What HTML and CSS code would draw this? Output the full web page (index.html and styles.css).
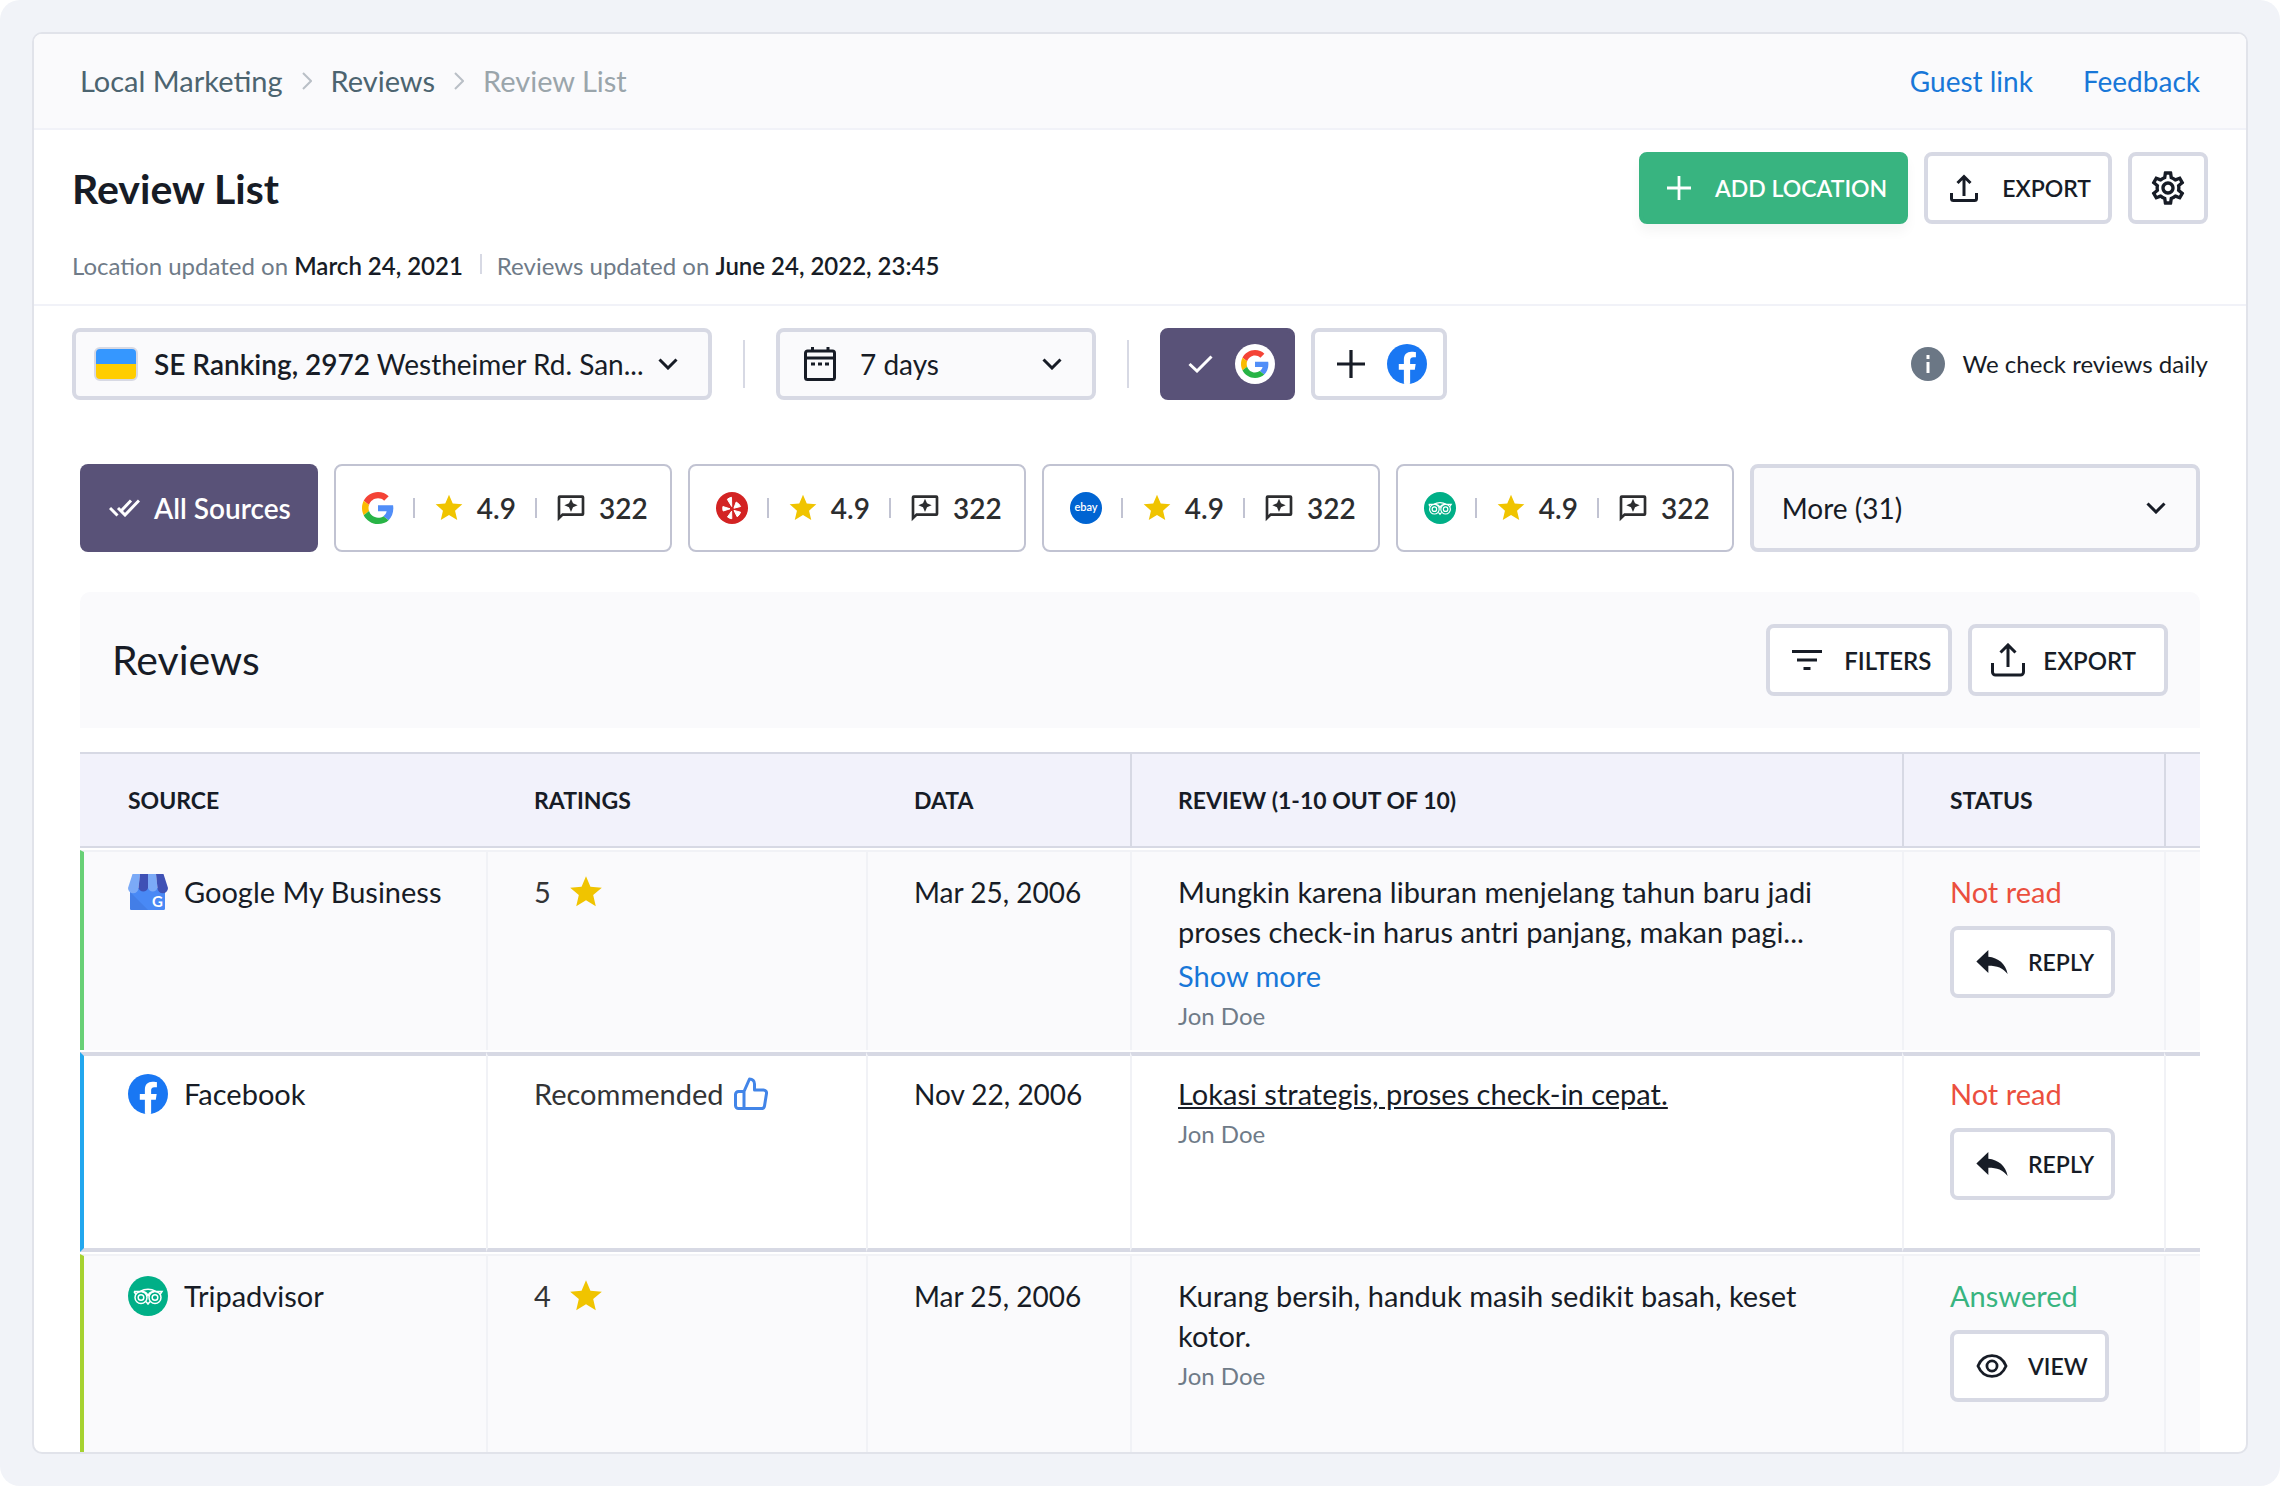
FILE: index.html
```html
<!DOCTYPE html>
<html lang="en">
  <head>
    <title>Review List</title>
    <meta charset="UTF-8">
    <meta name="viewport" content="width=device-width, initial-scale=1.0">
    <link rel="stylesheet" href="styles.css">
  </head>
  <body>

<!-- ICONS -->
<svg class="sprite" aria-hidden="true">
<symbol id="chevron" viewBox="0 0 20 12"><path d="M1.5 1.5 10 10l8.5-8.5" fill="none" stroke="currentColor" stroke-width="3"/></symbol>
<symbol id="crumb" viewBox="0 0 10 18"><path d="M1 1l8 8-8 8" fill="none" stroke="currentColor" stroke-width="2"/></symbol>
<symbol id="plus" viewBox="0 0 26 26"><path d="M13 0v26M0 13h26" stroke="currentColor" stroke-width="3"/></symbol>
<symbol id="export" viewBox="0 0 28 28"><path d="M14 22V3M7.5 9 14 2.500 20.500 9" fill="none" stroke="currentColor" stroke-width="3"/><path d="M1.500 19v5.500a2 2 0 0 0 2 2h21a2 2 0 0 0 2-2V19" fill="none" stroke="currentColor" stroke-width="3"/></symbol>
<symbol id="share" viewBox="0 0 34 34"><path d="M17 24V2.500M9.500 9.500 17 2l7.500 7.500M1.500 20v9a3 3 0 0 0 3 3h25a3 3 0 0 0 3-3v-9" fill="none" stroke="currentColor" stroke-width="3"/></symbol>
<symbol id="gear" viewBox="0 0 24 24"><path fill="currentColor" d="M19.43 12.98c.04-.32.07-.64.07-.98 0-.34-.03-.66-.07-.98l2.110-1.650c.19-.15.24-.42.12-.64l-2-3.460c-.09-.16-.26-.25-.44-.25-.06 0-.12.01-.17.03l-2.490 1c-.52-.4-1.080-.73-1.690-.98l-.38-2.650C14.460 2.180 14.250 2 14 2h-4c-.25 0-.46.18-.49.42l-.38 2.650c-.61.25-1.170.59-1.690.98l-2.490-1c-.06-.02-.12-.03-.18-.03-.17 0-.34.09-.43.25l-2 3.460c-.13.22-.07.49.12.64l2.110 1.650c-.04.32-.07.65-.07.98 0 .33.03.66.07.98l-2.110 1.650c-.19.15-.24.42-.12.64l2 3.460c.09.16.26.25.44.25.06 0 .12-.01.17-.03l2.490-1c.52.4 1.080.73 1.690.98l.38 2.650c.03.24.24.42.49.42h4c.25 0 .46-.18.49-.42l.38-2.650c.61-.25 1.170-.59 1.690-.98l2.490 1c.06.02.12.03.18.03.17 0 .34-.09.43-.25l2-3.460c.12-.22.07-.49-.12-.64l-2.110-1.650zm-1.980-1.710c.04.31.05.52.05.73 0 .21-.02.43-.05.73l-.14 1.130.89.7 1.080.84-.7 1.210-1.270-.51-1.040-.42-.9.68c-.43.32-.84.56-1.250.73l-1.060.43-.16 1.130-.2 1.350h-1.400l-.19-1.350-.16-1.130-1.060-.43c-.43-.18-.83-.41-1.230-.71l-.91-.7-1.060.43-1.270.51-.7-1.210 1.080-.84.89-.7-.14-1.130c-.03-.31-.05-.54-.05-.74s.02-.43.05-.73l.14-1.130-.89-.7-1.080-.84.7-1.210 1.270.51 1.040.42.9-.68c.43-.32.84-.56 1.250-.73l1.060-.43.16-1.130.2-1.350h1.390l.19 1.350.16 1.130 1.060.43c.43.18.83.41 1.230.71l.91.7 1.060-.43 1.270-.51.7 1.210-1.070.85-.89.7.14 1.130zM12 8c-2.210 0-4 1.790-4 4s1.790 4 4 4 4-1.790 4-4-1.790-4-4-4zm0 6c-1.100 0-2-.9-2-2s.9-2 2-2 2 .9 2 2-.9 2-2 2z"/></symbol>
<symbol id="star" viewBox="0 0 24 24"><path fill="#f0c400" d="M12 17.270 18.180 21l-1.640-7.030L22 9.240l-7.190-.61L12 2 9.190 8.630 2 9.240l5.460 4.730L5.820 21z"/></symbol>
<symbol id="comment" viewBox="0 0 24 24"><path fill="currentColor" d="M20.500 2.500H3.500A1.500 1.500 0 0 0 2 4v18l4-4h14.500a1.500 1.500 0 0 0 1.500-1.500V4a1.500 1.500 0 0 0-1.500-1.500zM20 16H5.300L4 17.300V4.500h16z" fill-rule="evenodd"/><path fill="currentColor" d="M12 15l1.500-3.500L17 10l-3.500-1.500L12 5l-1.500 3.500L7 10l3.500 1.500z"/></symbol>
<symbol id="google" viewBox="0 0 48 48"><path fill="#f44336" d="M24 9.500c3.540 0 6.710 1.220 9.210 3.600l6.850-6.850C35.900 2.380 30.470 0 24 0 14.620 0 6.510 5.380 2.560 13.220l7.980 6.190C12.430 13.720 17.740 9.500 24 9.500z"/><path fill="#518ef8" d="M46.980 24.550c0-1.570-.15-3.090-.38-4.550H24v9.020h12.940c-.58 2.960-2.260 5.480-4.780 7.180l7.730 6c4.510-4.180 7.090-10.360 7.090-17.650z"/><path fill="#fbbb00" d="M10.530 28.590c-.48-1.450-.76-2.990-.76-4.590s.27-3.140.76-4.590l-7.980-6.190C.92 16.460 0 20.120 0 24c0 3.880.92 7.540 2.560 10.780l7.970-6.190z"/><path fill="#28b446" d="M24 48c6.480 0 11.930-2.130 15.890-5.810l-7.730-6c-2.150 1.450-4.920 2.300-8.160 2.300-6.260 0-11.570-4.220-13.470-9.910l-7.980 6.190C6.510 42.620 14.620 48 24 48z"/></symbol>
<symbol id="facebook" viewBox="0 0 24 24"><circle cx="12" cy="12" r="12" fill="#1977f3"/><path fill="#fff" d="M16.671 15.469 17.203 12h-3.328V9.750c0-.949.465-1.874 1.956-1.874h1.513V4.922s-1.374-.234-2.686-.234c-2.741 0-4.533 1.662-4.533 4.669V12H7.078v3.469h3.047V23.850a12.130 12.130 0 0 0 3.750 0V15.469z"/></symbol>
<symbol id="tripadvisor" viewBox="0 0 40 40"><circle cx="20" cy="20" r="20" fill="#00af87"/><g fill="none" stroke="#fff" stroke-width="1.500"><path d="M6 15.500h6c5-2.700 11-2.700 16 0h6l-2 3M6 15.500l2 3"/><circle cx="13" cy="21.500" r="6"/><circle cx="27" cy="21.500" r="6"/><circle cx="13" cy="21.500" r="2.800"/><circle cx="27" cy="21.500" r="2.800"/><path d="M18 25.500l2 2.500 2-2.500M14 15.500c3.500.3 5.800 2.500 6 5 .2-2.500 2.500-4.700 6-5"/></g></symbol>
<symbol id="yelp" viewBox="0 0 32 32"><circle cx="16" cy="16" r="16" fill="#d32323"/><g fill="#fff" stroke="#fff" stroke-width="1" stroke-linejoin="round"><path d="M11.300 7.300Q13 5.800 15.500 5.300l.2 9.200zM6.900 14.500Q6.500 17 7.200 19l6.800-2.200zM11.500 25q2 1.500 4.300 1.700l-.2-7.500zM20.200 10q3.200 1.800 4.400 4.500l-6.700 1.700zM18 18.400l6.600 1.800q-1 3-3.400 4.600z"/></g></symbol>
<symbol id="ebay" viewBox="0 0 32 32"><circle cx="16" cy="16" r="16" fill="#0064d2"/><text x="16" y="19" text-anchor="middle" class="ebayText">ebay</text></symbol>
<symbol id="gmb" viewBox="0 0 40 36"><path fill="#4989f5" d="M2 14h35v20.500a1.500 1.500 0 0 1-1.500 1.500h-32A1.500 1.500 0 0 1 2 34.500z"/><path fill="#3d74d9" d="M2 18 20 36H3.500A1.500 1.500 0 0 1 2 34.500z" opacity=".5"/><path fill="#7baaf7" d="M4.500 0H12l-1.500 14a5 5 0 0 1-10.500 0z"/><path fill="#3f51b5" d="M12 0h8v14a5 5 0 0 1-9.500 0z"/><path fill="#7baaf7" d="M20 0h8l1.500 14a5 5 0 0 1-9.500 0z"/><path fill="#3f51b5" d="M28 0h7.500L40 14a5 5 0 0 1-10.500 0z"/><text x="29.500" y="33" text-anchor="middle" class="gmbText">G</text></symbol>
<symbol id="reply" viewBox="0 0 30 23"><path fill="currentColor" d="M0 11 11.500 0v6.500C21 7.500 28 13 30 23c-4.500-6-10-8-18.500-8v7z"/></symbol>
<symbol id="eye" viewBox="0 0 34 26"><path d="M1.800 13C8 -2 26 -2 32.200 13 26 28 8 28 1.800 13z" fill="none" stroke="currentColor" stroke-width="3"/><circle cx="17" cy="13" r="5.500" fill="none" stroke="currentColor" stroke-width="3"/></symbol>
</svg>

<div class="card">

<!-- BREADCRUMBS -->
<header class="topbar">
<nav class="crumbs" aria-label="Breadcrumb">
<a href="#">Local Marketing</a>
<svg class="crumbIcon"><use href="#crumb"/></svg>
<a href="#">Reviews</a>
<svg class="crumbIcon"><use href="#crumb"/></svg>
<span class="current">Review List</span>
</nav>
<nav class="links" aria-label="Links">
<a href="#">Guest link</a>
<a href="#">Feedback</a>
</nav>
</header>

<!-- TITLE -->
<section class="titleBar">
<div>
<h1>Review List</h1>
<p class="updated">
<span>Location updated on <b>March 24, 2021</b></span>
<span class="next">Reviews updated on <b>June 24, 2022, 23:45</b></span>
</p>
</div>
<div class="actions">
<button class="btn green"><svg class="icon24"><use href="#plus"/></svg>ADD LOCATION</button>
<button class="btn"><svg class="icon28"><use href="#export"/></svg>EXPORT</button>
<button class="btn square" aria-label="Settings"><svg class="icon40"><use href="#gear"/></svg></button>
</div>
</section>

<!-- FILTERS -->
<section class="filterBar">
<div class="field location">
<span class="flag"></span>
<span class="place"><b>SE Ranking, 2972</b> Westheimer Rd. San...</span>
<svg class="chevron"><use href="#chevron"/></svg>
<select class="cover" aria-label="Location"><option>SE Ranking, 2972 Westheimer Rd.</option></select>
</div>
<span class="line"></span>
<div class="field period">
<svg class="calendar" viewBox="0 0 32 34"><path d="M1.500 6a2 2 0 0 1 2-2h25a2 2 0 0 1 2 2v24.500a2 2 0 0 1-2 2h-25a2 2 0 0 1-2-2zM1.500 11h29M8.500 0v5M24 0v5" fill="none" stroke="currentColor" stroke-width="3"/><path d="M7 17h4M14 17h4M21 17h4" stroke="currentColor" stroke-width="3"/></svg>
<select aria-label="Period"><option>7 days</option></select>
<svg class="chevron"><use href="#chevron"/></svg>
</div>
<span class="line"></span>
<div class="toggles">
<button class="btn dark" aria-label="Google"><svg class="check" viewBox="0 0 25 18"><path d="M1.500 9 9 16 23.500 1.500" fill="none" stroke="currentColor" stroke-width="3"/></svg><span class="disc"><svg class="icon28"><use href="#google"/></svg></span></button>
<button class="btn plain" aria-label="Facebook"><svg class="icon28"><use href="#plus"/></svg><svg class="icon40"><use href="#facebook"/></svg></button>
</div>
<p class="note"><svg class="icon34" viewBox="0 0 34 34"><circle cx="17" cy="17" r="17" fill="#6b7785"/><path d="M17 15v11M17 8v4" stroke="#fff" stroke-width="3"/></svg>We check reviews daily</p>
</section>

<main>

<!-- SOURCES -->
<div class="sources">
<button class="all"><svg class="checks" viewBox="0 0 31 18"><path d="M1 9l7.500 7.500M9 9l7 7L30 1.500M22 1.500 12 12" fill="none" stroke="currentColor" stroke-width="3"/></svg>All Sources</button>
<button class="chip"><svg class="icon32"><use href="#google"/></svg><span class="rating"><svg class="icon32"><use href="#star"/></svg>4.9</span><span class="count"><svg class="icon32"><use href="#comment"/></svg>322</span></button>
<button class="chip"><svg class="icon32"><use href="#yelp"/></svg><span class="rating"><svg class="icon32"><use href="#star"/></svg>4.9</span><span class="count"><svg class="icon32"><use href="#comment"/></svg>322</span></button>
<button class="chip"><svg class="icon32"><use href="#ebay"/></svg><span class="rating"><svg class="icon32"><use href="#star"/></svg>4.9</span><span class="count"><svg class="icon32"><use href="#comment"/></svg>322</span></button>
<button class="chip"><svg class="icon32"><use href="#tripadvisor"/></svg><span class="rating"><svg class="icon32"><use href="#star"/></svg>4.9</span><span class="count"><svg class="icon32"><use href="#comment"/></svg>322</span></button>
<div class="field more">
<select aria-label="More sources"><option>More (31)</option></select>
<svg class="chevron"><use href="#chevron"/></svg>
</div>
</div>

<!-- REVIEWS -->
<div class="panel">
<h2>Reviews</h2>
<div class="panelButtons">
<button class="btn"><svg class="filterIcon" viewBox="0 0 30 20"><path d="M0 1.500h30M5 10h20M11.500 18.500h7" stroke="currentColor" stroke-width="3"/></svg>FILTERS</button>
<button class="btn wide"><svg class="icon34"><use href="#share"/></svg>EXPORT</button>
</div>
</div>

<table>
<colgroup><col class="colSource"><col class="colRatings"><col class="colData"><col><col class="colStatus"><col class="colEnd"></colgroup>
<thead>
<tr><th>SOURCE</th><th>RATINGS</th><th>DATA</th><th class="split">REVIEW (1-10 OUT OF 10)</th><th class="split">STATUS</th><th class="split"></th></tr>
</thead>
<tbody>
<tr class="gap"><td colspan="6"></td></tr>
<tr class="shade mybusiness">
<td><div class="name"><svg class="icon40"><use href="#gmb"/></svg>Google My Business</div></td>
<td><div class="mark">5<svg class="starBig"><use href="#star"/></svg></div></td>
<td class="date">Mar 25, 2006</td>
<td><p>Mungkin karena liburan menjelang tahun baru jadi<br>proses check-in harus antri panjang, makan pagi...</p><a class="showMore" href="#">Show more</a><p class="author">Jon Doe</p></td>
<td><p class="unread">Not read</p><button class="btn"><svg class="replyIcon"><use href="#reply"/></svg>REPLY</button></td>
<td></td>
</tr>
<tr class="gap"><td colspan="6"></td></tr>
<tr class="lined facebook">
<td><div class="name"><svg class="icon40"><use href="#facebook"/></svg>Facebook</div></td>
<td><div class="mark near">Recommended<svg class="icon34" viewBox="0 0 34 34"><path d="M10 14.500 15.500 2c3 0 5 2 5 5v6h9a3 3 0 0 1 3 3.500l-2 12.500a3 3 0 0 1-3 2.500H4.500a3 3 0 0 1-3-3v-11a3 3 0 0 1 3-3zM10 14.500v17" fill="none" stroke="#4285e8" stroke-width="3" stroke-linejoin="round"/></svg></div></td>
<td class="date">Nov 22, 2006</td>
<td><p><u>Lokasi strategis, proses check-in cepat.</u></p><p class="author">Jon Doe</p></td>
<td><p class="unread">Not read</p><button class="btn"><svg class="replyIcon"><use href="#reply"/></svg>REPLY</button></td>
<td></td>
</tr>
<tr class="gap"><td colspan="6"></td></tr>
<tr class="shade trip">
<td><div class="name"><svg class="icon40"><use href="#tripadvisor"/></svg>Tripadvisor</div></td>
<td><div class="mark">4<svg class="starBig"><use href="#star"/></svg></div></td>
<td class="date">Mar 25, 2006</td>
<td><p>Kurang bersih, handuk masih sedikit basah, keset<br>kotor.</p><p class="author">Jon Doe</p></td>
<td><p class="answered">Answered</p><button class="btn"><svg class="eyeIcon"><use href="#eye"/></svg>VIEW</button></td>
<td></td>
</tr>
</tbody>
</table>

</main>
</div>

  </body>
</html>
```
FILE: styles.css
```css
*{
box-sizing: border-box;
}

html{
background-color: white;
}

body{
margin: 0;
padding: 32px;
background-color: #f1f3f8;
border-radius: 20px;
font-family: Lato, "Noto Sans", sans-serif;
font-size: 29px;
line-height: 40px;
color: #171c26;
}

h1, h2, p{
margin: 0;
}

a{
text-decoration: none;
color: #1877d8;
}

b{
font-weight: 600;
}

svg{
flex: none;
}

button, select{
font-family: inherit;
font-size: 28px;
color: inherit;
cursor: pointer;
}

.sprite{
display: none;
}

.ebayText{
font-size: 11px;
fill: white;
}

.gmbText{
font-size: 15px;
font-weight: bold;
fill: white;
}

.icon24{ width: 24px; height: 24px; }
.icon28{ width: 28px; height: 28px; }
.icon32{ width: 32px; height: 32px; }
.icon34{ width: 34px; height: 34px; }
.icon40{ width: 40px; height: 40px; }

.card{
border: 2px solid #e1e3ea;
border-radius: 10px;
background-color: white;
overflow: hidden;
}

/* top bar */
.topbar{
display: flex;
justify-content: space-between;
align-items: center;
height: 96px;
padding: 0 46px;
background-color: #fafafc;
border-bottom: 2px solid #f1f2f8;
}

.crumbs, .links{
display: flex;
align-items: center;
gap: 19px;
}

.crumbs a{
color: #4c6470;
}

.links{
gap: 50px;
font-size: 28px;
}

.crumbIcon{
width: 10px;
height: 18px;
color: #b9bfc6;
}

.current{
color: #9aa5ab;
}

/* title */
.titleBar{
display: flex;
justify-content: space-between;
padding: 22px 38px 18px 38px;
border-bottom: 2px solid #f1f2f8;
}

h1{
font-size: 41px;
font-weight: 700;
line-height: 74px;
}

.updated{
display: flex;
padding-top: 20px;
font-size: 24px;
color: #6f7b88;
}

.updated b{
color: #171c26;
}

.next{
position: relative;
margin-left: 34px;
}

.next::before{
content: "";
position: absolute;
left: -17px;
top: 8px;
width: 2px;
height: 20px;
background-color: #d7d9e4;
}

.actions, .panelButtons{
display: flex;
gap: 16px;
}

.btn{
display: flex;
align-items: center;
gap: 22px;
height: 72px;
padding: 0 17px 0 22px;
border: 4px solid #d7d9e4;
border-radius: 8px;
background-color: white;
font-size: 23px;
font-weight: 600;
}

.actions .btn{
gap: 24px;
}

.btn.green{
padding: 0 17px 0 24px;
border-color: #38b480;
background-color: #38b480;
color: white;
box-shadow: 0 8px 12px rgba(0, 0, 0, .04);
}

.btn.square{
padding: 0 16px;
}

.panel .btn{
font-size: 24px;
}

.btn.wide{
gap: 18px;
padding: 0 28px 0 19px;
}

.btn.plain{
padding: 0 16px 0 22px;
}

.btn.dark{
padding: 0 16px 0 24px;
border-color: #595278;
background-color: #595278;
color: white;
}

/* filters */
.filterBar{
display: flex;
align-items: center;
padding: 22px 38px 0;
font-size: 28px;
}

.field{
position: relative;
display: flex;
align-items: center;
height: 72px;
border: 4px solid #d7d9e4;
border-radius: 8px;
background-color: #fafafc;
}

.field select{
width: 100%;
height: 100%;
border: 0;
background: none;
appearance: none;
}

.location{
width: 640px;
padding: 0 30px 0 18px;
}

.location .cover{
position: absolute;
left: 0;
top: 0;
opacity: 0;
}

.place{
flex: 1;
white-space: nowrap;
}

.flag{
flex: none;
width: 44px;
height: 34px;
margin-right: 16px;
border: 2px solid #d7d9e4;
border-radius: 6px;
background: linear-gradient(#3597ff 50%, #ffcd00 50%);
}

.chevron{
width: 20px;
height: 12px;
}

.period .chevron, .more .chevron{
position: absolute;
right: 30px;
pointer-events: none;
}

.period{
width: 320px;
}

.period select{
padding-left: 80px;
}

.calendar{
position: absolute;
left: 24px;
width: 32px;
height: 34px;
pointer-events: none;
}

.line{
width: 2px;
height: 48px;
margin: 0 31px;
background-color: #d7d9e4;
}

.toggles{
display: flex;
gap: 16px;
}

.check{
width: 25px;
height: 18px;
}

.disc{
display: flex;
align-items: center;
justify-content: center;
width: 40px;
height: 40px;
border-radius: 50%;
background-color: white;
}

.note{
display: flex;
align-items: center;
gap: 18px;
margin-left: auto;
font-size: 24px;
}

/* sources */
main{
padding: 64px 46px 0;
}

.sources{
display: flex;
gap: 16px;
}

.all, .chip, .more{
display: flex;
align-items: center;
height: 88px;
border-radius: 8px;
font-weight: 600;
}

.all{
gap: 14px;
padding: 0 27px 0 29px;
border: 0;
background-color: #595278;
color: white;
}

.checks{
width: 31px;
height: 18px;
}

.chip{
justify-content: space-between;
width: 338px;
padding: 0 22px 0 26px;
border: 2px solid #c1c3d2;
background-color: white;
color: #2c2d2f;
}

.rating, .count{
position: relative;
display: flex;
align-items: center;
gap: 12px;
}

.rating::before, .count::before{
content: "";
position: absolute;
left: -20px;
width: 2px;
height: 20px;
background-color: #c1c3d2;
}

.more{
flex: 1;
}

.more select{
padding-left: 28px;
}

/* reviews */
.panel{
display: flex;
justify-content: space-between;
align-items: center;
margin: 40px 0 24px;
padding: 32px;
border-radius: 10px 10px 0 0;
background-color: #fafafc;
}

h2{
font-size: 41px;
font-weight: 400;
}

.filterIcon{
width: 30px;
height: 20px;
}

table{
width: 100%;
table-layout: fixed;
border-collapse: separate;
border-spacing: 0;
}

.colSource{ width: 406px; }
.colRatings{ width: 380px; }
.colData{ width: 264px; }
.colStatus{ width: 262px; }
.colEnd{ width: 36px; }

th{
height: 96px;
padding: 0 0 0 48px;
border-top: 2px solid #d7d9e4;
border-bottom: 2px solid #d7d9e4;
background-color: #f2f2fb;
font-size: 23px;
font-weight: 700;
text-align: left;
}

.split{
padding-left: 46px;
border-left: 2px solid #d7d9e4;
}

td{
height: 200px;
padding: 20px 0 0 46px;
border-left: 2px solid #f1f2f6;
vertical-align: top;
}

td:last-child, th:last-child{
padding: 0;
}

td:first-child{
padding-left: 44px;
border-left-width: 4px;
}

.gap td{
height: 2px;
padding: 0;
border: 0;
}

.shade td{
border-top: 2px solid #f1f2f6;
background-color: #fafafc;
}

.lined td{
padding-top: 18px;
border-top: 4px solid #d7d9e4;
border-bottom: 4px solid #d7d9e4;
}

.trip td{
height: 198px;
}

.mybusiness td:first-child{ border-left-color: #68d076; }
.facebook td:first-child{ border-left-color: #22a7ee; }
.trip td:first-child{ border-left-color: #a6d230; }

.name, .mark{
display: flex;
align-items: center;
gap: 16px;
}

.mark{
color: #333436;
}

.mark.near{
gap: 10px;
}

.date{
font-size: 28px;
}

.starBig{
width: 38px;
height: 38px;
}

.showMore{
display: block;
padding-top: 4px;
}

.author{
font-size: 24px;
color: #6f7b88;
}

.unread{
color: #eb4f3e;
}

.answered{
color: #38b480;
}

td .btn{
gap: 20px;
margin-top: 14px;
}

.replyIcon, .eyeIcon{
width: 32px;
height: 24px;
}
```
